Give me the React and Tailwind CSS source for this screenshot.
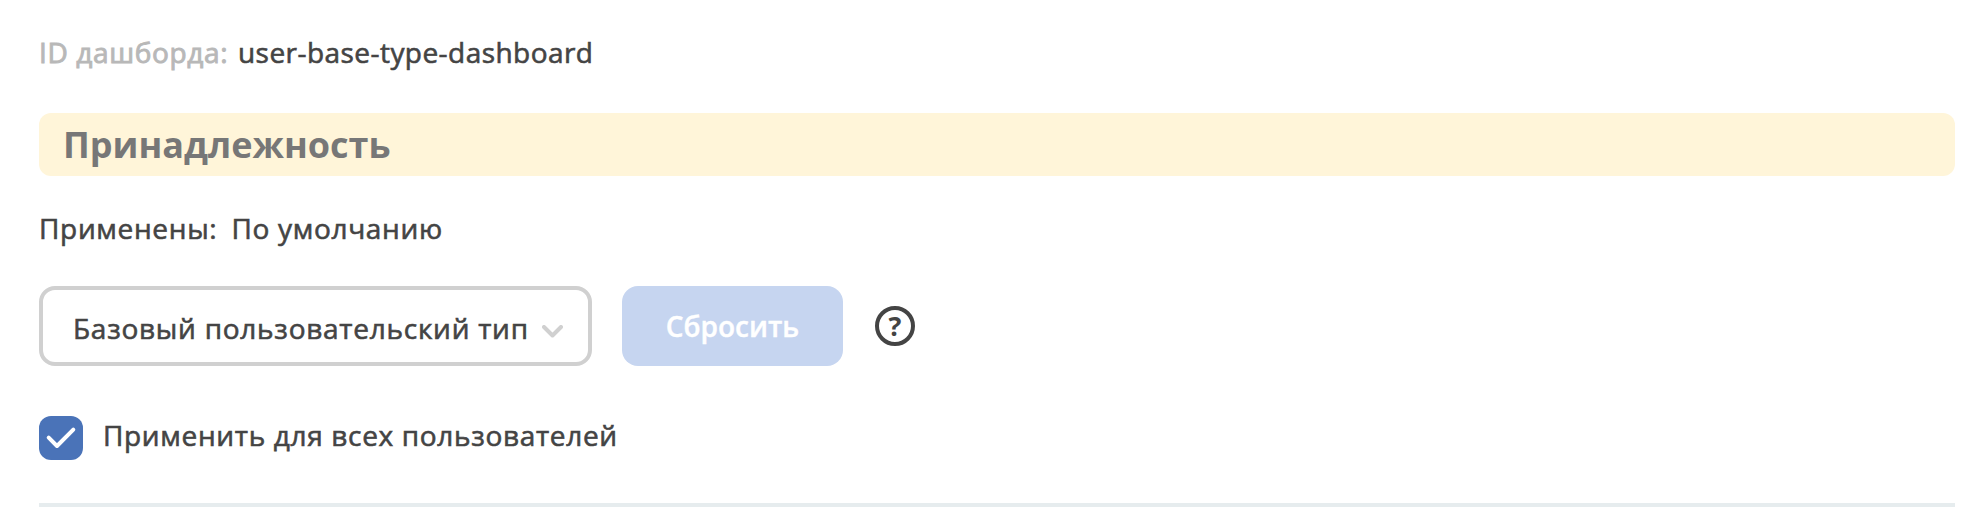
export default function App() {
  return (
    <main className="h-[518px] w-full bg-white pt-[33px] pr-[23px] pl-[39px] font-['Open_Sans',sans-serif] text-[28px] leading-[38px] text-[#444444]">
      <p className="flex h-[38px] whitespace-nowrap">
        <span className="w-[199px] tracking-[0.63px] text-[#b8b8b8] [-webkit-text-stroke:0.9px_#b8b8b8]">ID дашборда:</span>
        <span className="tracking-[0.45px] [-webkit-text-stroke:0.6px_#444444]">user-base-type-dashboard</span>
      </p>

      <h2 className="mt-[42px] flex h-[63px] items-center rounded-xl bg-[#fff5d9] px-6 text-[36px] leading-[49px] font-bold text-[#777777]">
        Принадлежность
      </h2>

      <p className="mt-[33px] flex h-[38px] whitespace-nowrap tracking-[0.68px] [-webkit-text-stroke:0.6px_#444444]">
        <span className="w-[192.5px]">Применены:</span>
        <span>По умолчанию</span>
      </p>

      <div className="mt-[39px] flex h-20 items-center">
        <button
          type="button"
          className="flex h-20 w-[553px] items-center justify-between rounded-2xl border-4 border-[#d0d0d0] pt-1 pr-[25px] pl-[30px] whitespace-nowrap"
        >
          <span className="-mt-px tracking-[0.74px] [-webkit-text-stroke:0.6px_#444444]">Базовый пользовательский тип</span>
          <svg className="mt-1.5 h-[13px] w-[21px]" viewBox="0 0 21 13" fill="none">
            <path
              d="M2 2l8.500 8.500L19 2"
              stroke="#d0d0d0"
              strokeWidth="4"
              strokeLinecap="round"
              strokeLinejoin="round"
            />
          </svg>
        </button>
        <button
          type="button"
          disabled
          className="ml-[30px] h-20 w-[221px] rounded-2xl bg-[#c6d5f0] font-semibold text-white [-webkit-text-stroke:0.4px_#ffffff]"
        >
          Сбросить
        </button>
        <span className="ml-8 flex size-10 items-center justify-center rounded-full border-4 border-[#444444] pb-px text-[27px] leading-none font-bold">
          ?
        </span>
      </div>

      <label className="mt-[50px] flex h-11 items-center">
        <span className="flex size-11 items-center justify-center rounded-xl bg-[#4a73b8]">
          <svg className="size-11" viewBox="0 0 44 44" fill="none">
            <path
              d="M9.700 21.700L18 30L34.300 13.700"
              stroke="#ffffff"
              strokeWidth="4"
              strokeLinecap="round"
              strokeLinejoin="round"
            />
          </svg>
        </span>
        <span className="-mt-1.5 ml-5 tracking-[0.67px] [-webkit-text-stroke:0.6px_#444444]">Применить для всех пользователей</span>
      </label>

      <hr className="mt-[43px] h-1 border-0 bg-[#e6ecee]" />
    </main>
  );
}
